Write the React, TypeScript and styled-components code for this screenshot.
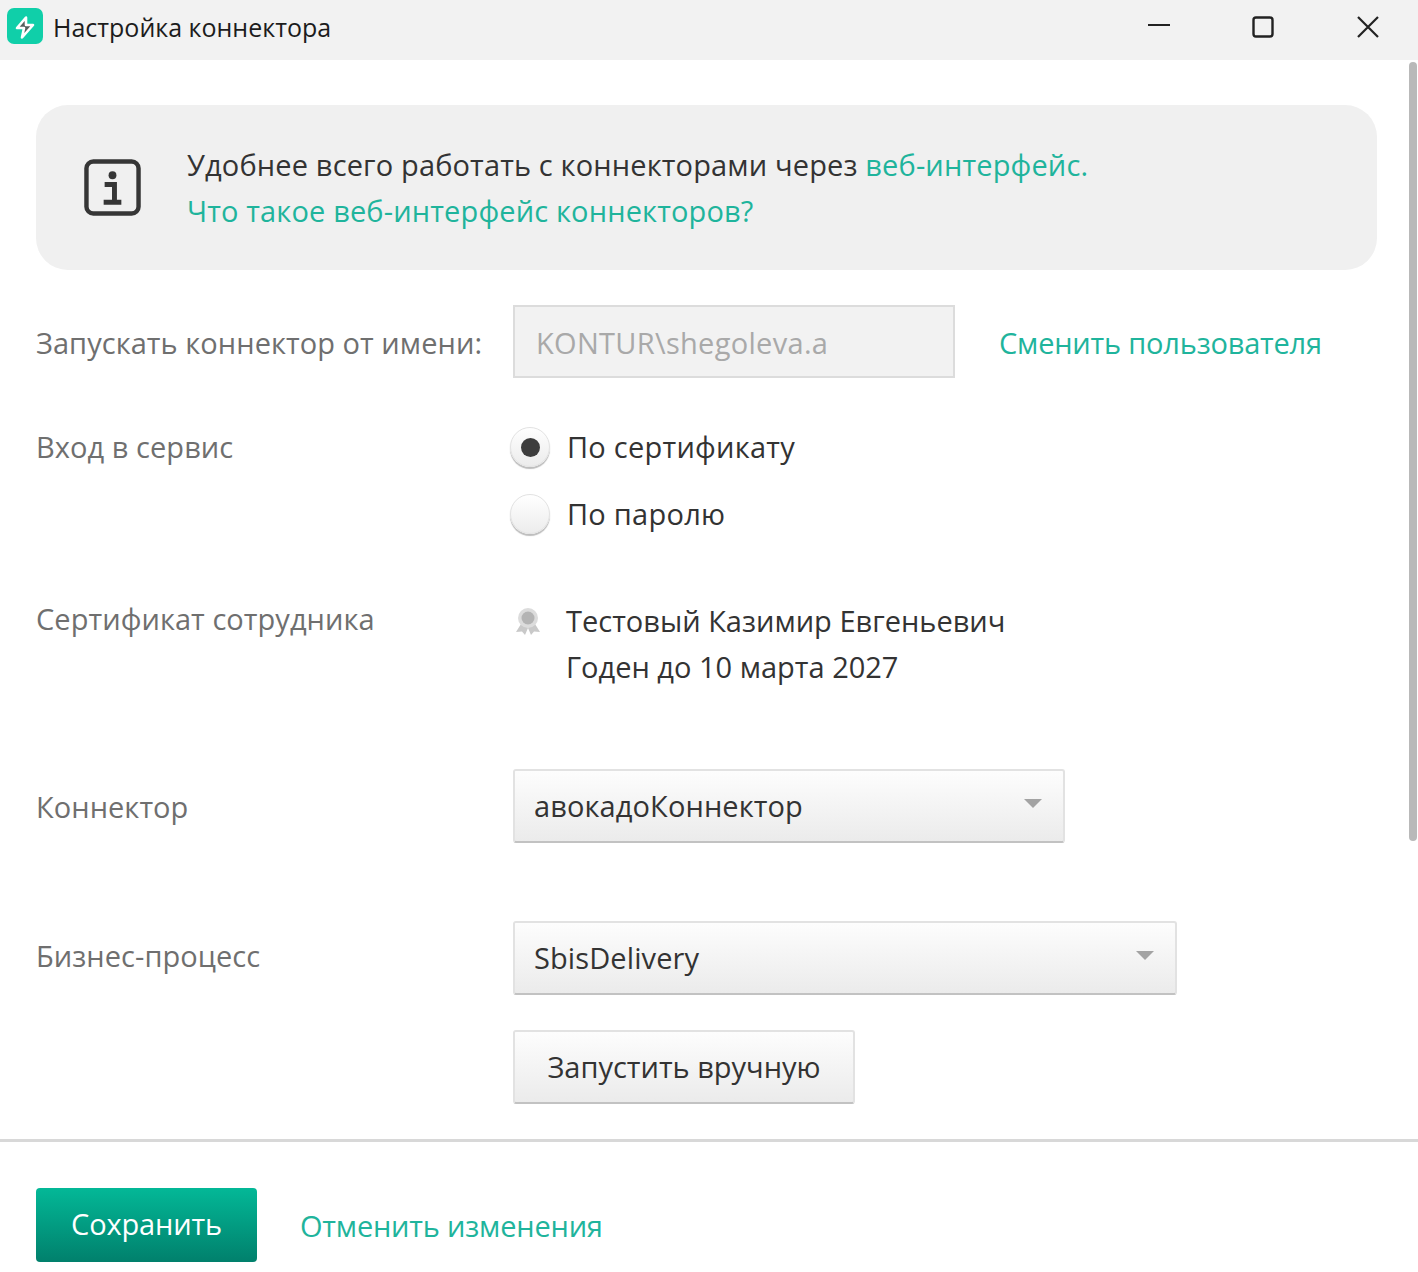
import React from "react";
import styled, { createGlobalStyle } from "styled-components";

const Global = createGlobalStyle`
  html, body { margin: 0; padding: 0; background: #fff; }
  body { font-family: "Open Sans", "Noto Sans", sans-serif; }
  * { box-sizing: border-box; }
`;

const Window = styled.div`
  position: relative;
  width: 1418px;
  height: 1272px;
  display: flex;
  flex-direction: column;
  overflow: hidden;
  background: #fff;
`;

const TitleBar = styled.header`
  height: 60px;
  flex: none;
  background: #f2f2f2;
  display: flex;
  align-items: center;
  padding: 0 0 8px 7px;
`;

const Title = styled.span`
  margin: 2px 0 0 10px;
  font-size: 25px;
  color: #1c1c1c;
`;

const WindowControls = styled.div`
  margin: 2px 0 0 auto;
  display: flex;
  align-items: center;
  padding-right: 38px;
  gap: 82px;
  svg { display: block; }
`;

const Content = styled.main`
  flex: 1;
  padding: 45px 41px 0 36px;
`;

const Banner = styled.section`
  height: 165px;
  background: #f0f0f0;
  border-radius: 32px;
  display: flex;
  align-items: center;
  padding-left: 48px;
`;

const BannerText = styled.div`
  margin-left: 46px;
  padding-top: 1px;
  font-size: 29px;
  line-height: 46px;
  letter-spacing: 0.14px;
  color: #333;
`;

const Link = styled.a`
  color: #1fb49c;
  cursor: pointer;
`;

const Row = styled.div<{ $top: number; $height: number }>`
  display: grid;
  grid-template-columns: 477px 1fr;
  margin-top: ${(p) => p.$top}px;
  height: ${(p) => p.$height}px;
`;

const Label = styled.div<{ $offset?: number }>`
  font-size: 29px;
  line-height: 40px;
  letter-spacing: 0.05px;
  color: #6f6f6f;
  padding-top: ${(p) => p.$offset ?? 0}px;
`;

const Field = styled.div`
  display: flex;
  align-items: flex-start;
`;

const DisabledInput = styled.div`
  width: 442px;
  height: 73px;
  background: #f2f2f2;
  border: 2px solid #dcdcdc;
  padding: 2px 0 0 21px;
  display: flex;
  align-items: center;
  font-size: 29px;
  letter-spacing: 0.3px;
  color: #a9a9a9;
`;

const SideLink = styled(Link)`
  margin-left: 44px;
  font-size: 29px;
  line-height: 76px;
  letter-spacing: -0.2px;
`;

const RadioGroup = styled.div`
  display: flex;
  flex-direction: column;
  gap: 27px;
  margin-left: -3px;
`;

const RadioRow = styled.label`
  display: flex;
  align-items: center;
  height: 40px;
  gap: 17px;
  font-size: 29px;
  letter-spacing: 0.25px;
  color: #333;
`;

const RadioCaption = styled.span`
  padding-bottom: 2px;
`;

const RadioDot = styled.span<{ $checked?: boolean }>`
  width: 40px;
  height: 40px;
  border-radius: 50%;
  background: linear-gradient(#ffffff, #ececec);
  border: 1px solid #e2e2e2;
  box-shadow: 0 2px 1px #bdbdbd;
  display: flex;
  align-items: center;
  justify-content: center;
  &::after {
    content: "";
    display: ${(p) => (p.$checked ? "block" : "none")};
    width: 19px;
    height: 19px;
    border-radius: 50%;
    background: #3d3d3d;
  }
`;

const CertBlock = styled.div`
  display: flex;
  align-items: flex-start;
  gap: 25px;
  padding-left: 2px;
  svg { flex: none; margin-top: 8px; }
`;

const CertText = styled.div`
  margin-top: -1px;
  font-size: 29px;
  line-height: 46px;
  color: #333;
`;

const Select = styled.div<{ $width: number }>`
  width: ${(p) => p.$width}px;
  height: 74px;
  border: 2px solid #e2e2e2;
  border-bottom-color: #c2c2c2;
  border-radius: 3px;
  background: linear-gradient(#fdfdfd, #ebebeb);
  padding: 0 21px 2px 19px;
  display: flex;
  align-items: center;
  justify-content: space-between;
  font-size: 29px;
  letter-spacing: 0.1px;
  color: #333;
`;

const Caret = styled.span`
  width: 0;
  height: 0;
  border-left: 9px solid transparent;
  border-right: 9px solid transparent;
  border-top: 9px solid #a3a3a3;
  margin-bottom: 3px;
`;

const Button = styled.button`
  width: 342px;
  height: 74px;
  border: 2px solid #e2e2e2;
  border-bottom-color: #c2c2c2;
  border-radius: 3px;
  background: linear-gradient(#fdfdfd, #ebebeb);
  font-family: inherit;
  font-size: 29px;
  color: #333;
  padding: 0 0 2px;
`;

const Divider = styled.hr`
  flex: none;
  margin: 0;
  border: 0;
  height: 3px;
  background: #d8d8d8;
`;

const Footer = styled.footer`
  flex: none;
  height: 130px;
  display: flex;
  align-items: flex-start;
  padding: 46px 0 0 36px;
`;

const PrimaryButton = styled.button`
  width: 221px;
  height: 74px;
  border: 0;
  border-radius: 4px;
  background: linear-gradient(#03b897, #01806c);
  color: #fff;
  font-family: inherit;
  font-size: 29px;
  letter-spacing: -0.15px;
  padding: 0 0 4px;
`;

const FooterLink = styled(Link)`
  margin-left: 43px;
  font-size: 29px;
  line-height: 76px;
  letter-spacing: -0.2px;
`;

const ScrollThumb = styled.div`
  position: absolute;
  top: 62px;
  left: 1409px;
  width: 8px;
  height: 779px;
  border-radius: 4px;
  background: #b9b9b9;
`;

const Logo = () => (
  <svg width="36" height="36" viewBox="0 0 36 36">
    <rect width="36" height="36" rx="7" fill="#10cfa9" />
    <path
      d="M19 9.5 10 20h7l-2 9.5L26 17h-7z"
      fill="#565f5d"
      stroke="#fff"
      strokeWidth="2.6"
      strokeLinejoin="round"
    />
  </svg>
);

const InfoIcon = () => (
  <svg width="57" height="57" viewBox="0 0 58 58" fill="none">
    <rect x="2.5" y="2.5" width="53" height="53" rx="7" stroke="#363636" strokeWidth="4.5" />
    <circle cx="29" cy="16.5" r="4" fill="#363636" />
    <path d="M21 26h10v17M20 44h18" stroke="#363636" strokeWidth="5" />
  </svg>
);

const CertIcon = () => (
  <svg width="26" height="28" viewBox="0 0 26 28" fill="none">
    <path d="M6 17 1 25l6-.5 3 3.5 3-7 3 7 3-3.5 6 .5-5-8z" fill="#c9c9c9" />
    <circle cx="13" cy="11" r="10" fill="#dcdcdc" />
    <circle cx="13" cy="11" r="6.5" fill="#b4b4b4" />
  </svg>
);

export default function App() {
  return (
    <Window>
      <Global />
      <TitleBar>
        <Logo />
        <Title>Настройка коннектора</Title>
        <WindowControls>
          <svg width="22" height="22" viewBox="0 0 22 22" fill="none">
            <path d="M0 9h22" stroke="#222" strokeWidth="2" />
          </svg>
          <svg width="22" height="22" viewBox="0 0 22 22" fill="none">
            <rect x="1.5" y="1.5" width="19" height="19" rx="2.5" stroke="#222" strokeWidth="2.4" />
          </svg>
          <svg width="24" height="24" viewBox="0 0 24 24" fill="none">
            <path d="M2 2l20 20M22 2 2 22" stroke="#222" strokeWidth="2.2" />
          </svg>
        </WindowControls>
      </TitleBar>
      <Content>
        <Banner>
          <InfoIcon />
          <BannerText>
            Удобнее всего работать с коннекторами через <Link>веб-интерфейс.</Link>
            <br />
            <Link>Что такое веб-интерфейс коннекторов?</Link>
          </BannerText>
        </Banner>
        <Row $top={35} $height={73}>
          <Label $offset={18}>Запускать коннектор от имени:</Label>
          <Field>
            <DisabledInput>KONTUR\shegoleva.a</DisabledInput>
            <SideLink>Сменить пользователя</SideLink>
          </Field>
        </Row>
        <Row $top={49} $height={107}>
          <Label>Вход в сервис</Label>
          <RadioGroup>
            <RadioRow>
              <RadioDot $checked />
              <RadioCaption>По сертификату</RadioCaption>
            </RadioRow>
            <RadioRow>
              <RadioDot />
              <RadioCaption>По паролю</RadioCaption>
            </RadioRow>
          </RadioGroup>
        </Row>
        <Row $top={65} $height={92}>
          <Label>Сертификат сотрудника</Label>
          <CertBlock>
            <CertIcon />
            <CertText>
              Тестовый Казимир Евгеньевич
              <br />
              Годен до 10 марта 2027
            </CertText>
          </CertBlock>
        </Row>
        <Row $top={78} $height={74}>
          <Label $offset={18}>Коннектор</Label>
          <Select $width={552}>
            авокадоКоннектор
            <Caret />
          </Select>
        </Row>
        <Row $top={78} $height={74}>
          <Label $offset={15}>Бизнес-процесс</Label>
          <Select $width={664}>
            SbisDelivery
            <Caret />
          </Select>
        </Row>
        <Row $top={35} $height={74}>
          <span />
          <Field>
            <Button>Запустить вручную</Button>
          </Field>
        </Row>
      </Content>
      <Divider />
      <Footer>
        <PrimaryButton>Сохранить</PrimaryButton>
        <FooterLink>Отменить изменения</FooterLink>
      </Footer>
      <ScrollThumb />
    </Window>
  );
}
